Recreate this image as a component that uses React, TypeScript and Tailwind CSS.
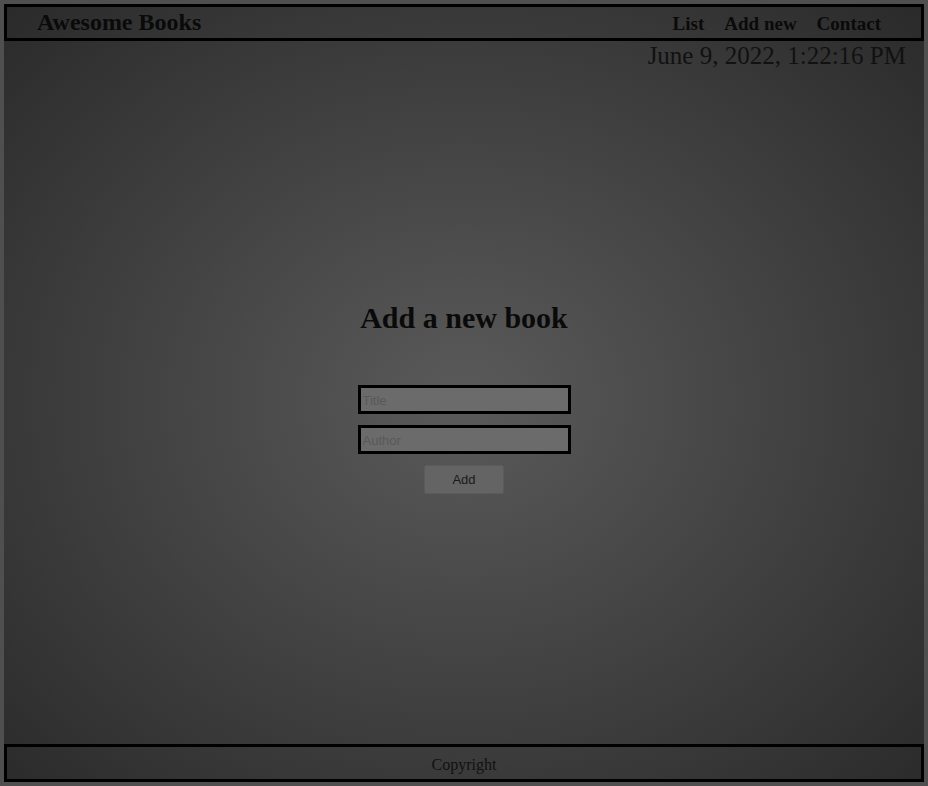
import React from "react";

export default function App() {
  return (
    <div className="h-[786px] w-[928px] overflow-hidden bg-[#4f4f4f] p-[4px] pb-[4px]" style={{ fontFamily: '"Liberation Serif", "Times New Roman", serif' }}>
      <div className="flex h-full flex-col bg-[radial-gradient(ellipse_at_50%_51%,#5a5a5a_0%,#2a2a2a_100%)] text-[#0a0a0a]">
        <header className="flex h-[37px] items-start justify-between border-[3px] border-black pl-[30px] pr-[40px]">
          <h1 className="pt-[2px] text-[24px] font-bold leading-[26px]">Awesome Books</h1>
          <nav className="flex gap-[20px] pt-[6px] text-[19px] font-bold leading-[21px]">
            <a>List</a>
            <a>Add new</a>
            <a>Contact</a>
          </nav>
        </header>
        <main className="flex flex-1 flex-col">
          <div className="pt-[1px] pr-[18px] text-right text-[25px] leading-[28px] text-[#111]">June 9, 2022, 1:22:16 PM</div>
          <section className="mt-[230px] flex flex-col items-center">
            <h2 className="text-[30px] font-bold leading-[36px]">Add a new book</h2>
            <form className="mt-[49px] flex flex-col items-center gap-[11px]" style={{ fontFamily: '"Liberation Sans", Arial, sans-serif' }}>
              <input
                placeholder="Title"
                className="h-[29px] w-[213px] border-[3px] border-black bg-[#6b6b6b] px-[2px] pt-[1px] text-[13px] text-black placeholder:text-[#595959] outline-none"
              />
              <input
                placeholder="Author"
                className="h-[29px] w-[213px] border-[3px] border-black bg-[#6b6b6b] px-[2px] pt-[1px] text-[13px] text-black placeholder:text-[#595959] outline-none"
              />
              <button
                type="button"
                className="h-[29px] w-[80px] rounded-[2px] border border-[#5b5b5b] bg-[#646464] pt-[1px] text-[13px] text-[#1a1a1a]"
              >
                Add
              </button>
            </form>
          </section>
        </main>
        <footer className="flex h-[38px] items-center justify-center border-[3px] border-black pt-[3px] text-[16px] text-[#111]">
          Copyright
        </footer>
      </div>
    </div>
  );
}
